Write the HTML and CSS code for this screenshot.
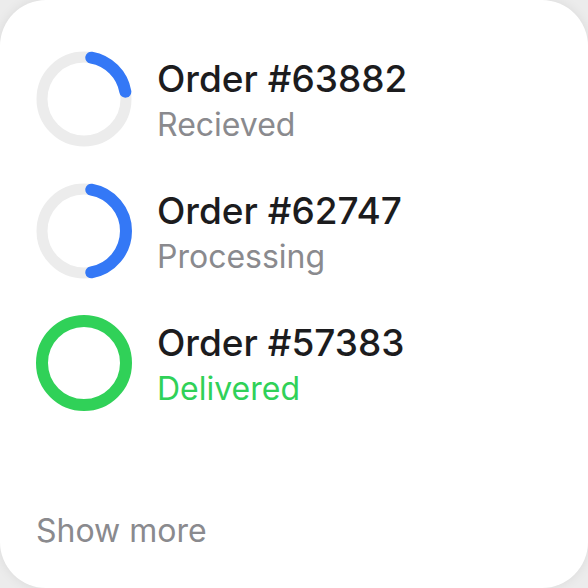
FILE: index.html
```html
<!DOCTYPE html>
<html lang="en">
<head>
<meta charset="utf-8">
<title>Orders</title>
<link rel="stylesheet" href="styles.css">
</head>
<body>
<div class="card">
  <ul class="orders">
    <li class="order">
      <svg class="ring" viewBox="0 0 96 96" width="96" height="96">
        <circle class="track" cx="48" cy="48" r="42"/>
        <path class="arc arc-blue" d="M55.29 6.64 A42 42 0 0 1 89.36 40.71"/>
      </svg>
      <div class="info">
        <div class="title">Order #63882</div>
        <div class="status">Recieved</div>
      </div>
    </li>
    <li class="order">
      <svg class="ring" viewBox="0 0 96 96" width="96" height="96">
        <circle class="track" cx="48" cy="48" r="42"/>
        <path class="arc arc-blue" d="M55.29 6.64 A42 42 0 0 1 55.29 89.36"/>
      </svg>
      <div class="info">
        <div class="title">Order #62747</div>
        <div class="status">Processing</div>
      </div>
    </li>
    <li class="order">
      <svg class="ring" viewBox="0 0 96 96" width="96" height="96">
        <circle class="track track-green" cx="48" cy="48" r="42"/>
      </svg>
      <div class="info">
        <div class="title">Order #57383</div>
        <div class="status status-done">Delivered</div>
      </div>
    </li>
  </ul>
  <div class="more">Show more</div>
</div>
</body>
</html>
```

FILE: styles.css
```css
html, body {
  margin: 0;
  padding: 0;
}
body {
  background: #ececec;
  font-family: Inter, "Noto Sans", sans-serif;
}
.card {
  box-sizing: border-box;
  width: 588px;
  height: 588px;
  background: #fff;
  border-radius: 46px;
  box-shadow: 0 0 12px rgba(0, 0, 0, 0.08);
  padding: 51px 36px 38px 36px;
  display: flex;
  flex-direction: column;
}
.orders {
  list-style: none;
  margin: 0;
  padding: 0;
  display: flex;
  flex-direction: column;
  gap: 36px;
}
.order {
  display: flex;
  align-items: center;
  gap: 25px;
  height: 96px;
}
.ring {
  flex: none;
  display: block;
}
.track {
  fill: none;
  stroke: #ececec;
  stroke-width: 11;
}
.track-green {
  stroke: #30d158;
  stroke-width: 12;
}
.arc {
  fill: none;
  stroke-width: 12;
  stroke-linecap: round;
}
.arc-blue {
  stroke: #3478f6;
}
.info {
  display: flex;
  flex-direction: column;
  gap: 4px;
}
.title {
  font-size: 37px;
  font-weight: 500;
  line-height: 46px;
  color: #1c1c1e;
}
.status {
  font-size: 32px;
  line-height: 37px;
  color: #8a8a8e;
}
.status-done {
  color: #30d158;
}
.more {
  margin-top: auto;
  font-size: 32px;
  line-height: 38px;
  color: #8a8a8e;
}
```
